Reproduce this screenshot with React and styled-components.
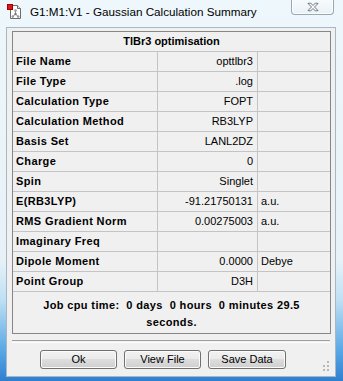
import React from "react";
import styled, { createGlobalStyle } from "styled-components";

const Global = createGlobalStyle`
  html, body { margin: 0; padding: 0; background: #ffffff; }
  body { font-family: "Liberation Sans", Arial, sans-serif; }
`;

const Window = styled.div`
  position: relative;
  width: 343px;
  height: 381px;
  box-sizing: border-box;
  padding: 0 7px 4px 6px;
  display: flex;
  flex-direction: column;
  background:
    linear-gradient(to right, rgba(255,255,255,0) 0, rgba(255,255,255,0) 100%),
    linear-gradient(to bottom, #eef7fb 0px, #e6f2f8 260px, #bfe0f4 300px, #5aa8e6 350px, #2f7fd0 381px);
  overflow: hidden;
`;

const TitleBar = styled.div`
  height: 27px;
  flex-shrink: 0;
  display: flex;
  align-items: flex-start;
`;

const AppIcon = styled.svg`
  width: 16px;
  height: 16px;
  margin: 4px 7px 0 1px;
  flex-shrink: 0;
`;

const Title = styled.div`
  font-family: "Liberation Sans", Arial, sans-serif;
  font-size: 11.7px;
  line-height: 16px;
  margin-top: 4px;
  color: #000;
  white-space: nowrap;
`;

const CloseButton = styled.div`
  margin-left: auto;
  margin-right: 2px;
  margin-top: -1px;
  width: 43px;
  height: 16px;
  box-sizing: border-box;
  border: 1px solid #9aa8b6;
  border-top: none;
  border-radius: 0 0 4px 4px;
  background: linear-gradient(to bottom, #f7fbfd 0%, #eaf2f7 100%);
  box-shadow: inset 0 0 0 1px rgba(255,255,255,0.8);
  display: flex;
  align-items: center;
  justify-content: center;
`;

const Client = styled.div`
  position: relative;
  flex: 1;
  background: #f0f0f0;
  border: 1px solid #a7b7c6;
  display: flex;
  flex-direction: column;
`;

const Table = styled.div`
  margin: 3px 4px 0 5px;
  border: 1px solid #868686;
  display: flex;
  flex-direction: column;
`;

const TableTitle = styled.div`
  height: 19px;
  border-bottom: 1px solid #c4c4c4;
  text-align: center;
  font-weight: bold;
  font-size: 11px;
  line-height: 19px;
  color: #000;
`;

const Row = styled.div`
  display: grid;
  grid-template-columns: 145px 100px 1fr;
  height: 19px;
  border-bottom: 1px solid #c4c4c4;
`;

const Cell = styled.div`
  font-size: 11px;
  line-height: 19px;
  color: #000;
  white-space: nowrap;
  overflow: hidden;
  border-right: ${(p) => (p.$last ? "none" : "1px solid #c4c4c4")};
  text-align: ${(p) => (p.$align === "right" ? "right" : "left")};
  padding: ${(p) => (p.$align === "right" ? "0 4px 0 0" : "0 0 0 3px")};
  font-weight: ${(p) => (p.$bold ? "bold" : "normal")};
  letter-spacing: ${(p) => (p.$bold ? "0.37px" : "0")};
`;

const Footer = styled.div`
  height: 41px;
  box-sizing: border-box;
  padding-top: 5px;
  text-align: center;
  font-weight: bold;
  font-size: 11px;
  line-height: 17px;
  letter-spacing: 0.37px;
  white-space: pre;
  color: #000;
`;

const Separator = styled.div`
  margin: 6px 5px 0 5px;
  height: 1px;
  border-top: 1px solid #a0a0a0;
  border-bottom: 1px solid #ffffff;
`;

const ButtonRow = styled.div`
  display: flex;
  gap: 7px;
  margin: 7px 0 0 33px;
`;

const Button = styled.div`
  width: ${(p) => p.$w || 77}px;
  height: 19px;
  box-sizing: border-box;
  border: 1px solid #707070;
  border-radius: 3px;
  background: linear-gradient(to bottom, #f2f2f2 0%, #ebebeb 45%, #dddddd 50%, #cfcfcf 100%);
  box-shadow: inset 0 0 0 1px #fbfbfb;
  font-size: 11px;
  line-height: 17px;
  text-align: center;
  color: #000;
`;

const Grip = styled.svg`
  position: absolute;
  right: 5px;
  bottom: 5px;
  width: 9px;
  height: 10px;
`;

const rows = [
  ["File Name", "opttlbr3", ""],
  ["File Type", ".log", ""],
  ["Calculation Type", "FOPT", ""],
  ["Calculation Method", "RB3LYP", ""],
  ["Basis Set", "LANL2DZ", ""],
  ["Charge", "0", ""],
  ["Spin", "Singlet", ""],
  ["E(RB3LYP)", "-91.21750131", "a.u."],
  ["RMS Gradient Norm", "0.00275003", "a.u."],
  ["Imaginary Freq", "", ""],
  ["Dipole Moment", "0.0000", "Debye"],
  ["Point Group", "D3H", ""],
];

export default function App() {
  return (
    <>
      <Global />
      <Window>
        <TitleBar>
          <AppIcon viewBox="0 0 16 16">
            <path d="M3.5 1.5 H10.5 L13.5 4.5 V14.5 H3.5 Z" fill="#ffffff" stroke="#6e6e6e" />
            <path d="M10.5 1.5 V4.5 H13.5" fill="#e8e8e8" stroke="#6e6e6e" />
            <line x1="8.5" y1="7" x2="8.5" y2="10" stroke="#8a8a8a" strokeWidth="1" />
            <line x1="8.5" y1="10" x2="6" y2="12.5" stroke="#8a8a8a" strokeWidth="1" />
            <line x1="8.5" y1="10" x2="11" y2="12.5" stroke="#8a8a8a" strokeWidth="1" />
            <circle cx="8.5" cy="6.5" r="1.3" fill="#9a9a9a" />
            <circle cx="8.5" cy="10" r="1.2" fill="#7a7a7a" />
            <circle cx="5.8" cy="12.6" r="1.3" fill="#9a9a9a" />
            <circle cx="11.2" cy="12.6" r="1.3" fill="#9a9a9a" />
            <rect x="0.5" y="0.5" width="5" height="5" fill="#e0141c" stroke="#a00000" />
          </AppIcon>
          <Title>G1:M1:V1 - Gaussian Calculation Summary</Title>
          <CloseButton>
            <svg width="12" height="10" viewBox="0 0 12 10">
              <path
                d="M1 1.5 L3.5 1 L6 3.5 L8.5 1 L11 1.5 L7.5 5 L11 8.5 L8.5 9 L6 6.5 L3.5 9 L1 8.5 L4.5 5 Z"
                fill="#fdfdfd"
                stroke="#6d7680"
                strokeWidth="1"
                strokeLinejoin="round"
              />
            </svg>
          </CloseButton>
        </TitleBar>
        <Client>
          <Table>
            <TableTitle>TlBr3 optimisation</TableTitle>
            {rows.map(([label, value, unit]) => (
              <Row key={label}>
                <Cell $bold>{label}</Cell>
                <Cell $align="right">{value}</Cell>
                <Cell $last>{unit}</Cell>
              </Row>
            ))}
            <Footer>{"Job cpu time:  0 days  0 hours  0 minutes 29.5\nseconds."}</Footer>
          </Table>
          <Separator />
          <ButtonRow>
            <Button $w={77}>Ok</Button>
            <Button $w={77}>View File</Button>
            <Button $w={78}>Save Data</Button>
          </ButtonRow>
          <Grip viewBox="0 0 9 10">
            <rect x="6" y="0" width="2" height="2" fill="#b8b8b8" />
            <rect x="6" y="4" width="2" height="2" fill="#b8b8b8" />
            <rect x="2" y="4" width="2" height="2" fill="#b8b8b8" />
            <rect x="6" y="8" width="2" height="2" fill="#b8b8b8" />
            <rect x="2" y="8" width="2" height="2" fill="#b8b8b8" />
          </Grip>
        </Client>
      </Window>
    </>
  );
}
